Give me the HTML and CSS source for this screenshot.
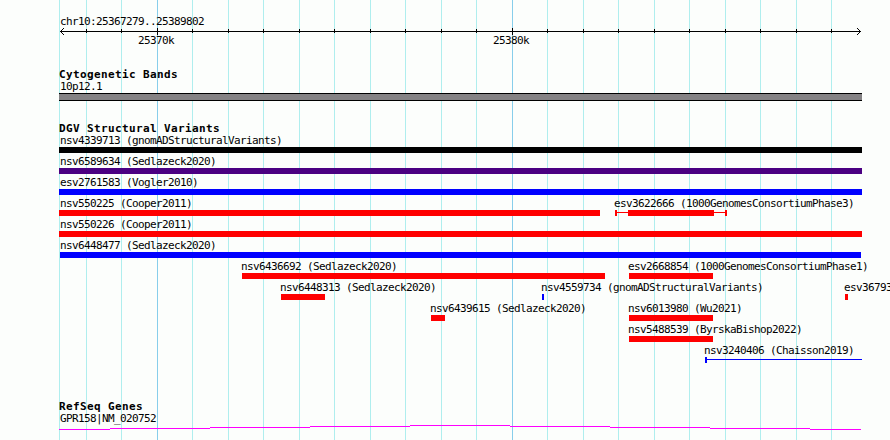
FILE: index.html
```html
<!DOCTYPE html>
<html lang="en">
<head>
<meta charset="utf-8">
<title>chr10:25367279..25389802</title>
<link rel="stylesheet" href="styles.css">
</head>
<body>
<main class="browser">
  <svg class="gridlines" width="890" height="440" shape-rendering="crispEdges" aria-hidden="true">
    <path class="minor" d="M59.5 0V440M86.5 0V440M121.5 0V440M192.5 0V440M228.5 0V440M263.5 0V440M299.5 0V440M334.5 0V440M370.5 0V440M405.5 0V440M441.5 0V440M476.5 0V440M547.5 0V440M583.5 0V440M618.5 0V440M654.5 0V440M689.5 0V440M725.5 0V440M760.5 0V440M796.5 0V440M831.5 0V440"/>
    <path class="major" d="M157.5 0V440M512.5 0V440"/>
  </svg>

  <header class="ruler">
    <div class="label">chr10:25367279..25389802</div>
    <svg class="axis" width="803" height="7" shape-rendering="crispEdges" aria-hidden="true">
      <path d="M1 3.5H802M27.5 1V5M62.5 1V5M133.5 1V5M169.5 1V5M204.5 1V5M240.5 1V5M275.5 1V5M311.5 1V5M346.5 1V5M382.5 1V5M417.5 1V5M488.5 1V5M524.5 1V5M559.5 1V5M595.5 1V5M630.5 1V5M666.5 1V5M701.5 1V5M737.5 1V5M772.5 1V5M98.5 0V7M453.5 0V7"/>
      <path class="heads" d="M2 2h1v1h-1zM3 1h1v1h-1zM4 0h1v1h-1zM2 4h1v1h-1zM3 5h1v1h-1zM4 6h1v1h-1zM800 2h1v1h-1zM799 1h1v1h-1zM798 0h1v1h-1zM800 4h1v1h-1zM799 5h1v1h-1zM798 6h1v1h-1z"/>
    </svg>
    <div class="ticks"><span class="label">25370k</span><span class="label">25380k</span></div>
  </header>

  <section class="track cytoband">
    <h2>Cytogenetic Bands</h2>
    <div class="label">10p12.1</div>
    <div class="band"></div>
  </section>

  <section class="track variants">
    <h2>DGV Structural Variants</h2>
    <div class="row"><div class="feature full"><div class="label">nsv4339713 (gnomADStructuralVariants)</div><div class="bar black"></div></div></div>
    <div class="row"><div class="feature full"><div class="label">nsv6589634 (Sedlazeck2020)</div><div class="bar purple"></div></div></div>
    <div class="row"><div class="feature full"><div class="label">esv2761583 (Vogler2010)</div><div class="bar blue"></div></div></div>
    <div class="row">
      <div class="feature" style="width:541px"><div class="label">nsv550225 (Cooper2011)</div><div class="bar"></div></div>
      <div class="feature inset" style="margin-left:15px;width:112px"><div class="label">esv3622666 (1000GenomesConsortiumPhase3)</div><div class="range"><i class="cap"></i><i class="whisker"></i><i class="core"></i><i class="whisker"></i><i class="cap"></i></div></div>
    </div>
    <div class="row"><div class="feature full"><div class="label">nsv550226 (Cooper2011)</div><div class="bar"></div></div></div>
    <div class="row"><div class="feature full"><div class="label">nsv6448477 (Sedlazeck2020)</div><div class="bar blue trimmed"></div></div></div>
    <div class="row">
      <div class="feature inset" style="margin-left:183px;width:363px"><div class="label">nsv6436692 (Sedlazeck2020)</div><div class="bar"></div></div>
      <div class="feature inset" style="margin-left:24px;width:84px"><div class="label">esv2668854 (1000GenomesConsortiumPhase1)</div><div class="bar"></div></div>
    </div>
    <div class="row">
      <div class="feature inset" style="margin-left:222px;width:44px"><div class="label">nsv6448313 (Sedlazeck2020)</div><div class="bar"></div></div>
      <div class="feature inset" style="margin-left:217px;width:2px"><div class="label">nsv4559734 (gnomADStructuralVariants)</div><div class="bar blue"></div></div>
      <div class="feature inset" style="margin-left:301px;width:3px"><div class="label">esv36793</div><div class="bar"></div></div>
    </div>
    <div class="row">
      <div class="feature inset" style="margin-left:372px;width:14px"><div class="label">nsv6439615 (Sedlazeck2020)</div><div class="bar"></div></div>
      <div class="feature inset" style="margin-left:184px;width:84px"><div class="label">nsv6013980 (Wu2021)</div><div class="bar"></div></div>
    </div>
    <div class="row"><div class="feature inset" style="margin-left:570px;width:84px"><div class="label">nsv5488539 (ByrskaBishop2022)</div><div class="bar"></div></div></div>
    <div class="row"><div class="feature inset" style="margin-left:646px;width:157px"><div class="label">nsv3240406 (Chaisson2019)</div><div class="range open"><i class="cap"></i><i class="whisker"></i></div></div></div>
  </section>

  <section class="track genes">
    <h2>RefSeq Genes</h2>
    <div class="label">GPR158|NM_020752</div>
    <svg class="gene" width="803" height="5" shape-rendering="crispEdges" aria-hidden="true">
      <path d="M0 4.5H51M51 3.5H151M151 2.5H251M251 1.5H351M351 .5H451M451 1.5H551M551 2.5H651M651 3.5H751M751 4.5H802"/>
    </svg>
  </section>
</main>
</body>
</html>
```
FILE: styles.css
```css
body {
  margin: 0;
  background: #fcfefc;
  color: #000;
}

.browser {
  position: relative;
  box-sizing: border-box;
  width: 890px;
  height: 440px;
  padding: 13px 0 0 59px;
  overflow: hidden;
  font: 11px/17px "DejaVu Sans Mono", "Liberation Mono", monospace;
  letter-spacing: -0.622px;
}

.gridlines {
  position: absolute;
  top: 0;
  left: 0;
  z-index: -1;
}

.minor { stroke: #afeeee; }
.major { stroke: #87ceeb; }

.label {
  height: 15px;
  padding-left: 1px;
  white-space: pre;
}

.axis, .gene { display: block; }
.axis { stroke: #000; }
.heads { stroke: none; }

.ticks {
  display: flex;
  gap: 318px;
  height: 15px;
  margin-top: -3px;
  padding-left: 78px;
}

.track { margin-top: 19px; }
.genes { margin-top: 35px; }

h2 {
  height: 12px;
  margin: 0;
  font-size: 11px;
  line-height: 17px;
  font-weight: bold;
  letter-spacing: 0.378px;
  white-space: pre;
}

.band {
  box-sizing: border-box;
  width: 803px;
  height: 8px;
  border: solid #000;
  border-width: 1px 0;
  background: #848284;
}

.row {
  display: flex;
  height: 21px;
}

.feature { flex: none; }
.full { width: 803px; }
.inset .label {
  padding-left: 0;
  margin-left: -1px;
}

.bar {
  height: 6px;
  background: #f00;
}

.black { background: #000; }
.purple { background: #4b0082; }
.blue { background: #00f; }
.trimmed { margin: 0 1px; }

.range {
  display: flex;
  height: 6px;
  color: #f00;
}

.open { color: #00f; }

.cap, .core { background: currentColor; }
.cap { width: 2px; }
.core { width: 86px; }

.whisker {
  flex: 1;
  height: 1px;
  margin-top: 2px;
  background: currentColor;
}

.gene { stroke: #f0f; }
```
